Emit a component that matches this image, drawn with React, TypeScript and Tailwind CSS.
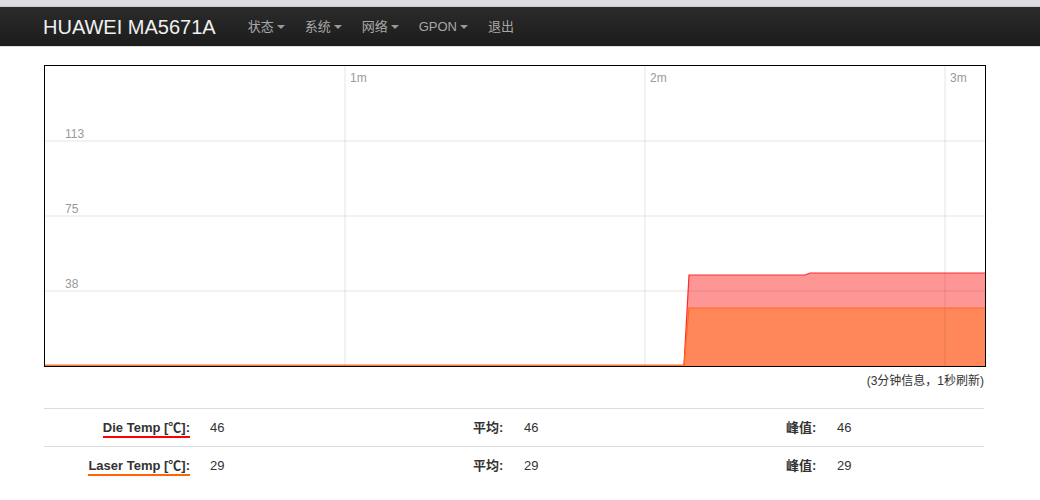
import React from "react"

const navItems = [
  { label: "状态", caret: true },
  { label: "系统", caret: true },
  { label: "网络", caret: true },
  { label: "GPON", caret: true },
  { label: "退出", caret: false },
]

const rows = [
  { label: "Die Temp [℃]:", value: 46, avg: 46, peak: 46, line: "border-[#ff0000]" },
  { label: "Laser Temp [℃]:", value: 29, avg: 29, peak: 29, line: "border-[#ff6600]" },
]

function Caret() {
  return (
    <span className="ml-[3px] inline-block h-0 w-0 border-x-4 border-t-4 border-x-transparent border-t-[#999] align-middle" />
  )
}

function Chart() {
  return (
    <div className="h-[302px] w-[942px] border border-black bg-white">
      <svg width="940" height="300" viewBox="0 0 940 300" className="block">
        <path
          d="M0 299 L639 299 L644 209 L760 209 L765 207 L940 207 L940 300 L0 300 Z"
          fill="#ff9696"
        />
        <path d="M0 299 L639 299 L644 242 L940 242 L940 300 L0 300 Z" fill="#ff875a" />
        <g stroke="rgba(0,0,0,0.07)" strokeWidth="1.5">
          <line x1="300" y1="0" x2="300" y2="300" />
          <line x1="600" y1="0" x2="600" y2="300" />
          <line x1="900" y1="0" x2="900" y2="300" />
          <line x1="0" y1="75" x2="940" y2="75" />
          <line x1="0" y1="150" x2="940" y2="150" />
          <line x1="0" y1="225" x2="940" y2="225" />
        </g>
        <path d="M639 299 L644 209 L760 209 L765 207 L940 207" fill="none" stroke="#ff2a2a" strokeWidth="1.2" />
        <path d="M0 299 L639 299 L644 242 L940 242" fill="none" stroke="#ff6a1a" strokeWidth="1.2" />
        <g fill="#999" fontSize="12" fontFamily="Liberation Sans, sans-serif">
          <text x="20" y="72">113</text>
          <text x="20" y="147">75</text>
          <text x="20" y="222">38</text>
          <text x="305" y="16">1m</text>
          <text x="605" y="16">2m</text>
          <text x="905" y="16">3m</text>
        </g>
      </svg>
    </div>
  )
}

export default function App() {
  return (
    <div className="min-h-[500px] bg-white font-['Liberation_Sans','Noto_Sans_CJK_SC',sans-serif] text-[13px] text-[#333]">
      <div className="h-[7px] border-b border-[#c8c9ce] bg-[#dcdde2]" />
      <div className="flex h-[40px] items-center border-b border-[#ddd] bg-gradient-to-b from-[#2b2b2b] to-[#1c1c1c] pl-[43px]">
        <span className="mr-[22px] text-[20px] leading-[20px] text-[#f0f0f0]">HUAWEI MA5671A</span>
        {navItems.map((item) => (
          <span key={item.label} className="flex items-center px-[10px] text-[13px] text-[#a8a8a8]">
            {item.label}
            {item.caret && <Caret />}
          </span>
        ))}
      </div>

      <div className="ml-[44px] w-[940px] pt-[18px]">
        <Chart />
        <div className="mt-[7px] text-right text-[12px] leading-[14px]">(3分钟信息，1秒刷新)</div>

        <div className="mt-[20px]">
          {rows.map((r) => (
            <div key={r.label} className="grid h-[38px] grid-cols-[158px_263px_51px_262px_51px_155px] items-center border-t border-[#ddd]">
              <div className="pr-[12px] text-right">
                <span className={`inline-block border-b-2 font-bold leading-[16px] ${r.line}`}>{r.label}</span>
              </div>
              <div className="pl-[8px]">{r.value}</div>
              <div className="pl-[8px] font-bold">平均:</div>
              <div className="pl-[8px]">{r.avg}</div>
              <div className="pl-[8px] font-bold">峰值:</div>
              <div className="pl-[8px]">{r.peak}</div>
            </div>
          ))}
        </div>
      </div>
    </div>
  )
}
